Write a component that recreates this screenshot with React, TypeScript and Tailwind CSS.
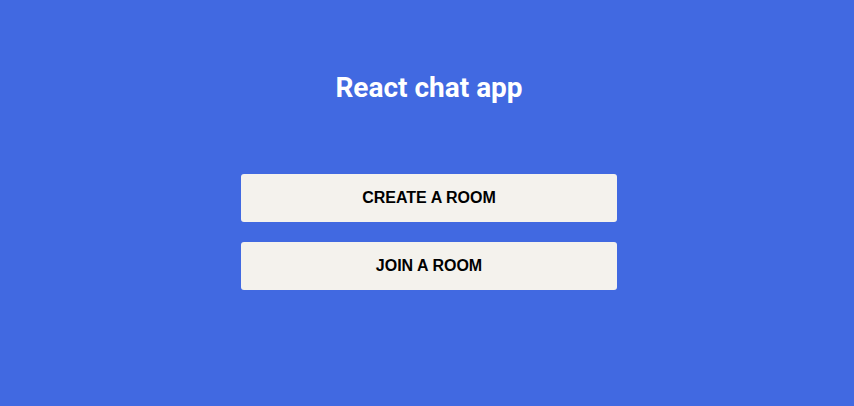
export default function App() {
  return (
    <div className="min-h-screen w-full bg-[#4169e1] flex flex-col items-center pl-[4px]">
      <h1 className="mt-[68px] text-[28px] leading-[40px] font-bold text-white font-['Roboto',sans-serif]">
        React chat app
      </h1>
      <div className="mt-[66px] flex flex-col gap-[20px] w-[376px]">
        <button className="h-[48px] w-full rounded-[3px] bg-[#f4f2ed] text-black text-[16px] font-bold font-['Liberation_Sans',Arial,sans-serif]">
          CREATE A ROOM
        </button>
        <button className="h-[48px] w-full rounded-[3px] bg-[#f4f2ed] text-black text-[16px] font-bold font-['Liberation_Sans',Arial,sans-serif]">
          JOIN A ROOM
        </button>
      </div>
    </div>
  );
}
